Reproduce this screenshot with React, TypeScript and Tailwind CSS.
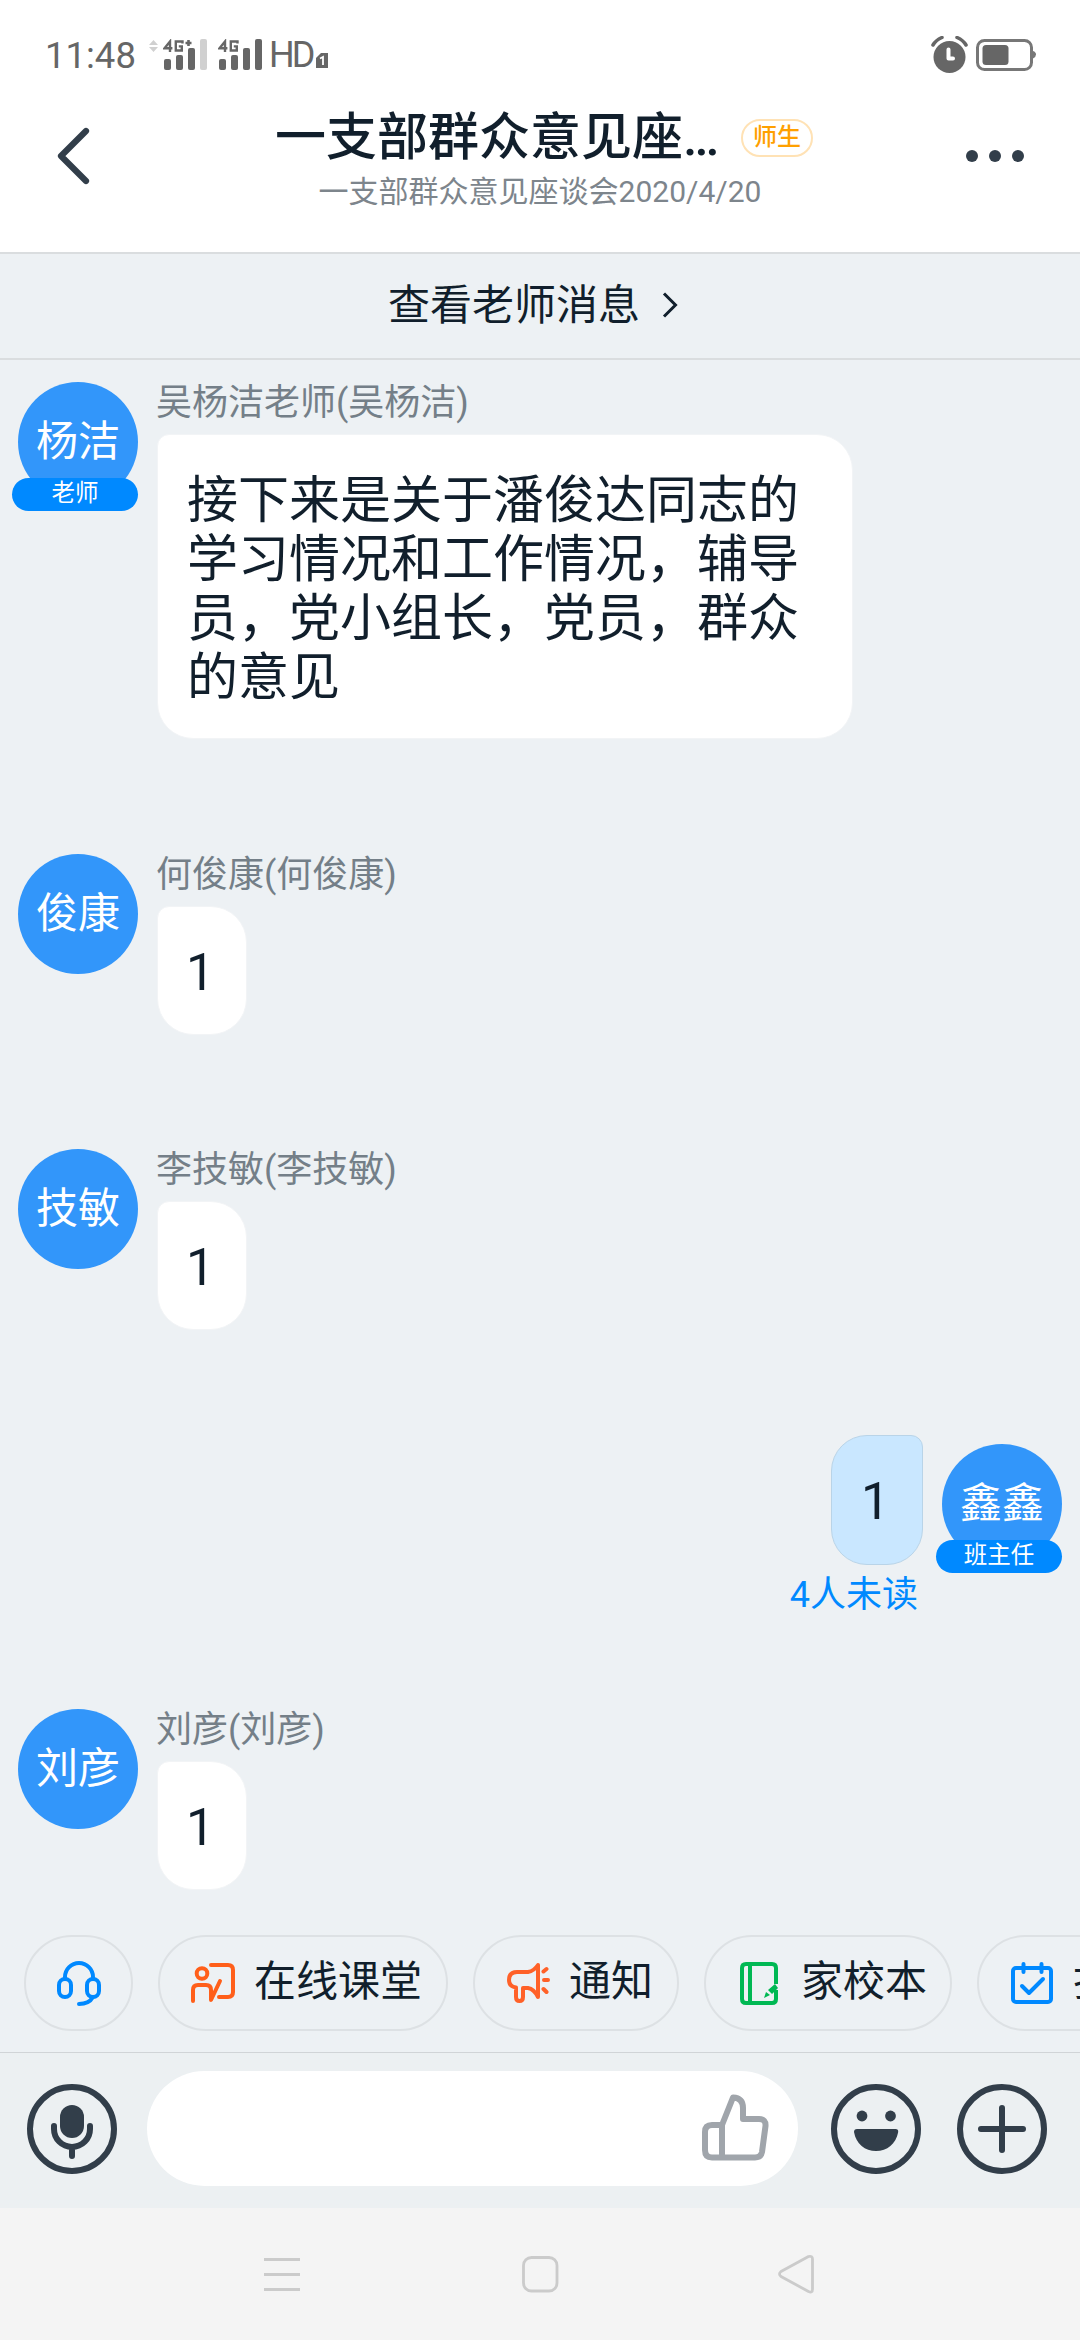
import React from "react";

const SANS = "font-['Roboto','Noto_Sans_CJK_SC',sans-serif]";

function Bars({ faded, plus }: { faded?: boolean; plus?: boolean }) {
  return (
    <svg width="44" height="32" viewBox="0 0 44 32" fill="#666">
      <g fill="none" stroke="#666" strokeWidth="2.4">
        <path d="M7 13V2.500L1.500 9.300H9.400M19.500 4.400V2.500H12.800V11.500H18.800V7.400H15.800" />
        {plus && <path d="M22.500 4H28.500M25.500 1V7" strokeWidth="2.6" />}
      </g>
      <rect x="1" y="20" width="7" height="11" rx="2" />
      <rect x="13" y="16" width="7" height="15" rx="2" />
      <rect x="25" y="9" width="7" height="22" rx="2" />
      <rect x="37" y="0" width="7" height="31" rx="2" fill={faded ? "#d0d0d0" : "#666"} />
    </svg>
  );
}

function StatusBar() {
  return (
    <div className="flex h-[109px] items-center pl-[45px] pr-[43px] text-[#666]">
      <span className="mt-[2px] w-[104px] text-[36.5px] leading-[44px]">11:48</span>
      <svg className="mb-[18px]" width="9" height="12" viewBox="0 0 9 12" fill="#d0d0d0">
        <path d="M4.500 0L9 5H0zM4.500 12L9 7H0z" />
      </svg>
      <div className="ml-[5px] flex gap-[11px]">
        <Bars faded plus />
        <Bars />
      </div>
      <span className="ml-[7px] mt-[1px] w-[47px] text-[36px] leading-[44px] tracking-[-3px]">HD</span>
      <svg className="mt-[11px]" width="12" height="15" viewBox="0 0 12 15">
        <path d="M5 0H12V15H0V5z" fill="#666" />
        <path d="M4 5.500L7 4V12" stroke="#fff" strokeWidth="1.8" fill="none" />
      </svg>
      <svg className="ml-auto" width="37" height="37" viewBox="0 0 37 37">
        <circle cx="18.500" cy="21" r="16" fill="#666" />
        <path d="M2 9Q5 4 11 1.500M35 9Q32 4 26 1.500" fill="none" stroke="#666" strokeWidth="3.500" strokeLinecap="round" />
        <path d="M17.500 13.500V22.500H22" fill="none" stroke="#fff" strokeWidth="4" strokeLinecap="round" strokeLinejoin="round" />
      </svg>
      <svg className="ml-[8px]" width="61" height="32" viewBox="0 0 61 32">
        <rect x="1.500" y="1.500" width="54" height="29" rx="7" fill="none" stroke="#777" strokeWidth="3" />
        <rect x="6.500" y="6" width="26" height="20" rx="3.500" fill="#666" />
        <path d="M57 12Q60 13 60 15.500T57 19.500z" fill="#777" />
      </svg>
    </div>
  );
}

function Header() {
  return (
    <div className="flex h-[143px] items-start pl-[56px] pr-[56px]">
      <svg className="mt-[18px]" width="36" height="58" viewBox="0 0 36 58">
        <path d="M30 4L5 29L30 54" fill="none" stroke="#323e4a" strokeWidth="6.200" strokeLinecap="round" strokeLinejoin="round" />
      </svg>
      <div className="flex flex-1 flex-col items-center">
        <div className="ml-[30px] flex h-[58px] items-center">
          <h1 className="whitespace-nowrap text-[51px] font-medium leading-[58px] text-[#111f2c]">一支部群众意见座…</h1>
          <span className="ml-[22px] flex h-[38px] w-[72px] items-center justify-center rounded-full border-2 border-[#ffe2b5] pb-[2px] text-[24px] font-medium leading-none text-[#ffa000]">师生</span>
        </div>
        <p className="ml-[22px] mt-[7px] whitespace-nowrap text-[30px] leading-[36px] text-[#7d858c]">一支部群众意见座谈会2020/4/20</p>
      </div>
      <svg className="mt-[41px]" width="58" height="12" viewBox="0 0 58 12" fill="#323e4a">
        <circle cx="6" cy="6" r="6" /><circle cx="29" cy="6" r="6" /><circle cx="52" cy="6" r="6" />
      </svg>
    </div>
  );
}

function Avatar({ label, role }: { label: string; role?: string }) {
  return (
    <div className="relative h-[120px] w-[120px] shrink-0">
      <div className="flex h-[120px] items-center justify-center rounded-full bg-[#3296fa] text-[42px] leading-none text-white">
        <span className="mt-[-1px]">{label}</span>
      </div>
      {role && (
        <div className="absolute right-0 top-[96px] flex h-[33px] w-[126px] items-center justify-center rounded-full bg-[#0089ff] text-[23.500px] leading-none text-white">
          <span className="mt-[-1px]">{role}</span>
        </div>
      )}
    </div>
  );
}

function Message({ avatar, role, name, text, wide }: { avatar: string; role?: string; name: string; text: string; wide?: boolean }) {
  return (
    <div className="flex items-start gap-[19px] pl-[18px]">
      <Avatar label={avatar} role={role} />
      <div className="flex flex-col items-start">
        <div className="ml-[-1px] h-[52px] whitespace-nowrap text-[36px] leading-[42px] text-[#747f88]">{name}</div>
        <div className={wide
          ? "h-[305px] w-[696px] rounded-[36px] rounded-tl-[12px] border border-[#f2f4f6] bg-white pl-[29px] pr-[50px] pt-[36px] text-[51px] leading-[59px] text-[#111f2c]"
          : "h-[129px] w-[90px] rounded-[36px] rounded-tl-[12px] border border-[#f2f4f6] bg-white pl-[28px] pt-[36px] text-[51px] leading-[59px] text-[#111f2c]"}>
          {text}
        </div>
      </div>
    </div>
  );
}

function OwnMessage() {
  return (
    <div className="flex items-start justify-end gap-[19px] pr-[18px]">
      <div className="flex flex-col items-end">
        <div className="h-[130px] w-[92px] rounded-[36px] rounded-tr-[12px] border border-[#b9d4e8] bg-[#c9e7ff] pl-[29px] pt-[36px] text-[51px] leading-[59px] text-[#111f2c]">1</div>
        <div className="mr-[5px] mt-[9px] text-[36px] leading-[42px] text-[#0089ff]">4人未读</div>
      </div>
      <div className="mt-[9px]"><Avatar label="鑫鑫" role="班主任" /></div>
    </div>
  );
}

const line = { fill: "none", strokeWidth: 4, strokeLinecap: "round", strokeLinejoin: "round" } as const;

function HeadsetIcon() {
  return (
    <svg width="44" height="45" viewBox="0 0 44 45" {...line} stroke="#0089ff">
      <rect x="2" y="18" width="12" height="18" rx="6" />
      <rect x="30" y="18" width="12" height="18" rx="6" />
      <path d="M8 18V16A14 14 0 0 1 36 16V18M36 36Q32 43 22 43" />
    </svg>
  );
}

function ClassIcon() {
  return (
    <svg width="44" height="44" viewBox="0 0 44 44" {...line} stroke="#ff5f1a">
      <circle cx="11" cy="12.500" r="5.300" />
      <path d="M2 40V29Q2 24 7 24H15Q20 24 20 29V39L29 20M20 4H37Q42 4 42 9V31Q42 36 37 36H28" />
    </svg>
  );
}

function NoticeIcon() {
  return (
    <svg width="44" height="44" viewBox="0 0 44 44" {...line} stroke="#ff6128">
      <path d="M31 4V36Q27 28 21 27H16V36Q16 40 12.500 40Q9 40 9 36V26.500Q2 25.500 2 19Q2 11 10 11H21Q27 10 31 4ZM37 19H41M36.500 10.500L39.500 8M36.500 28L39.500 31" />
    </svg>
  );
}

function BookIcon() {
  return (
    <svg width="38" height="43" viewBox="0 0 38 43" {...line} stroke="#00b853">
      <path d="M36 22V6Q36 2 32 2H6Q2 2 2 6V37Q2 41 6 41H32Q36 41 36 37V28M10 2V41" strokeLinecap="butt" />
      <path d="M35 22L38 26L32 32L28 28ZM26 30L30 33L24 36Z" fill="#00b853" stroke="none" />
    </svg>
  );
}

function CalendarIcon() {
  return (
    <svg className="shrink-0" width="42" height="42" viewBox="0 0 42 42" {...line} stroke="#0089ff">
      <rect x="2" y="6" width="38" height="34" rx="3" />
      <path d="M12.500 2V10M30.500 2V10M11 24L18 31L32 17" />
    </svg>
  );
}

function Chips() {
  const chip = "flex h-[96px] shrink-0 items-center rounded-full border-2 border-[#dde1e4] text-[42px] leading-none text-[#111f2c]";
  return (
    <div className="flex h-[117px] items-start gap-[25px] overflow-hidden whitespace-nowrap pl-[24px]">
      <div className={`${chip} w-[109px] pl-[31px]`}><HeadsetIcon /></div>
      <div className={`${chip} w-[290px] pl-[31px]`}><ClassIcon /><span className="ml-[19px] mt-[-3px]">在线课堂</span></div>
      <div className={`${chip} w-[206px] pl-[32px]`}><NoticeIcon /><span className="ml-[18px] mt-[-3px]">通知</span></div>
      <div className={`${chip} w-[248px] pl-[34px]`}><BookIcon /><span className="ml-[23px] mt-[-3px]">家校本</span></div>
      <div className={`${chip} w-[206px] pl-[32px]`}><CalendarIcon /><span className="ml-[20px] mt-[-3px]">打卡</span></div>
    </div>
  );
}

function InputBar() {
  return (
    <div className="flex h-[156px] items-start border-t border-[#d0d4d7] bg-[#ecf0f2] pl-[27px] pr-[33px] pt-[18px]">
      <svg className="mt-[13px]" width="90" height="90" viewBox="0 0 90 90" fill="none" stroke="#323e4a" strokeWidth="6" strokeLinecap="round">
        <circle cx="45" cy="45" r="42" />
        <rect x="33" y="21" width="24" height="33" rx="12" fill="#323e4a" stroke="none" />
        <path d="M27 42V45A18 18 0 0 0 63 45V42M45 63V72" />
      </svg>
      <div className="ml-[30px] flex h-[115px] w-[651px] items-center justify-end rounded-full bg-white pr-[29px]">
        <svg className="mt-[-3px]" width="67" height="67" viewBox="0 0 67 67" fill="none" stroke="#a0a5ab" strokeWidth="6" strokeLinejoin="round">
          <path d="M20 31H10Q3 31 3 38V56Q3 63.500 10 63.500H53Q59 63.500 60 58L63.500 32Q64 25 57 25H41V14Q41 4 31 3.500L20 31V63" />
        </svg>
      </div>
      <svg className="ml-[33px] mt-[13px]" width="90" height="90" viewBox="0 0 90 90" fill="#323e4a">
        <circle cx="45" cy="45" r="42" fill="none" stroke="#323e4a" strokeWidth="6" />
        <circle cx="31" cy="32" r="5.400" /><circle cx="59.500" cy="32" r="5.400" />
        <path d="M26 45H64.500Q67.500 45 67.200 48C65 60 56 67 45 67S25 60 23 48Q23 45 26 45Z" />
      </svg>
      <svg className="ml-auto mt-[13px]" width="90" height="90" viewBox="0 0 90 90" fill="none" stroke="#323e4a" strokeWidth="6" strokeLinecap="round">
        <circle cx="45" cy="45" r="42" />
        <path d="M24 45H66M45 24V66" />
      </svg>
    </div>
  );
}

function NavBar() {
  return (
    <div className="flex h-[132px] items-center justify-between bg-[#f4f4f4] pl-[264px] pr-[265px]">
      <svg width="36" height="40" viewBox="0 0 36 40" stroke="#cbcbcb" strokeWidth="3"><path d="M0 5.500H36M0 20.500H36M0 35.500H36" /></svg>
      <svg className="ml-[4px]" width="37" height="37" viewBox="0 0 37 37"><rect x="1.500" y="1.500" width="33.500" height="33.500" rx="8" fill="none" stroke="#cbcbcb" strokeWidth="2.800" /></svg>
      <svg width="38" height="40" viewBox="0 0 38 40">
        <path d="M31.500 2.500Q35.500 1.500 35.500 5V35Q35.500 39.500 31.500 37.500L4 22.500Q1 20 4 17.500Z" fill="none" stroke="#cbcbcb" strokeWidth="2.800" strokeLinejoin="round" />
      </svg>
    </div>
  );
}

export default function App() {
  return (
    <div className={`${SANS} flex h-[2340px] w-[1080px] flex-col overflow-hidden bg-[#edf1f4]`} lang="zh-CN">
      <div className="h-[252px] bg-white">
        <StatusBar />
        <Header />
      </div>
      <div className="flex h-[108px] items-center justify-center border-y-2 border-[#dadddf] pr-[14px] text-[42px] leading-none text-[#111f2c]">
        <span className="mt-[-1px]">查看老师消息</span>
        <svg className="ml-[22px] mt-[-2px]" width="16" height="28" viewBox="0 0 16 28"><path d="M2 2.500L13.500 14L2 25.500" fill="none" stroke="#111f2c" strokeWidth="3" /></svg>
      </div>
      <div className="flex h-[1575px] flex-col pt-[22px]">
        <div className="h-[472px]"><Message avatar="杨洁" role="老师" name="吴杨洁老师(吴杨洁)" text="接下来是关于潘俊达同志的学习情况和工作情况，辅导员，党小组长，党员，群众的意见" wide /></div>
        <div className="h-[295px]"><Message avatar="俊康" name="何俊康(何俊康)" text="1" /></div>
        <div className="h-[286px]"><Message avatar="技敏" name="李技敏(李技敏)" text="1" /></div>
        <div className="h-[274px]"><OwnMessage /></div>
        <Message avatar="刘彦" name="刘彦(刘彦)" text="1" />
      </div>
      <Chips />
      <InputBar />
      <NavBar />
    </div>
  );
}
